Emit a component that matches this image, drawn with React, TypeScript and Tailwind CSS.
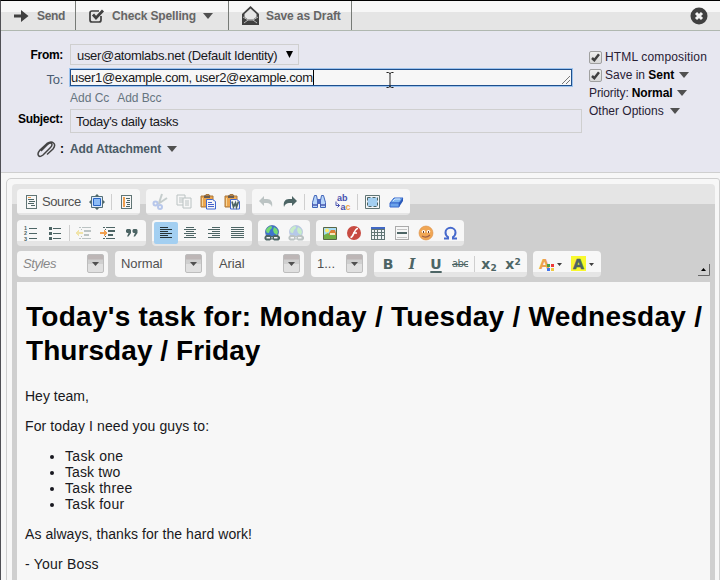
import React from "react";

type Kids = { children?: React.ReactNode };

/** 16x16 toolbar glyph in a fixed 24px cell. */
function Icon({ children, dim, active }: Kids & { dim?: boolean; active?: boolean }) {
  return (
    <span className={`flex h-[22px] w-6 shrink-0 items-center justify-center rounded-[2px] ${active ? "bg-[#a3cff1]" : ""} ${dim ? "opacity-35" : ""}`}>
      <svg width="16" height="16" viewBox="0 0 16 16" fill="none" className="shrink-0 overflow-visible">{children}</svg>
    </span>
  );
}

function Sep() {
  return <i className="mx-[2px] h-4 w-px shrink-0 bg-[#cfcfcf]" />;
}

function Group({ w, children, low }: Kids & { w: string; low?: boolean }) {
  return (
    <div className={`${w} flex h-[26px] shrink-0 items-center rounded-[4px] px-[2px] ${low ? "bg-[linear-gradient(#f7f7f7_24px,#e5e5e5_24px)]" : "bg-[linear-gradient(#f7f7f7_21px,#e5e5e5_21px)]"}`}>
      {children}
    </div>
  );
}

function Combo({ w, children, cls = "" }: Kids & { w: string; cls?: string }) {
  return (
    <div className={`${w} flex h-[26px] shrink-0 items-center justify-between rounded-[4px] bg-[#f7f7f7] pr-1 pl-[6px]`}>
      <span className={`text-[13px] leading-4 ${cls}`}>{children}</span>
      <span className="-mt-px flex h-[19px] w-[17px] items-center justify-center rounded-[2px] border border-[#bdbdbd] bg-[linear-gradient(#bdb6b6_4px,#cfcfcf_5px,#cfcfcf_9px,#e0e0e0_9px)]">
        <svg width="7" height="4" viewBox="0 0 7 4"><path d="M0 0h7L3.500 4z" fill="#505050" /></svg>
      </span>
    </div>
  );
}

function Caret({ cls = "" }: { cls?: string }) {
  return <svg className={`shrink-0 ${cls}`} width="10" height="6" viewBox="0 0 10 6"><path d="M0 0h10L5 6z" fill="#505050" /></svg>;
}

function Check() {
  return (
    <span className="flex h-[13px] w-[13px] shrink-0 items-center justify-center rounded-[2px] border border-[#a0a0a0] bg-gradient-to-b from-[#efefef] to-[#d8d8d8]">
      <svg width="9" height="9" viewBox="0 0 9 9"><path d="M1 5l2.3 2.2L8 1.200" stroke="#404040" strokeWidth="2.500" fill="none" /></svg>
    </span>
  );
}

function Lines({ rows }: { rows: [number, number][] }) {
  return (
    <g shapeRendering="crispEdges" fill="currentColor">
      {rows.map(([x, w], i) => <rect key={i} x={x} y={2 + i * 2} width={w} height="1" />)}
    </g>
  );
}

const INK = "#4d6565";

function IndentArt({ right }: { right?: boolean }) {
  return (
    <g shapeRendering="crispEdges">
      <path d="M3 2h2v1H3zM6 2h9v1H6zM8 5h7v2H8zM8 9h5v2H8zM3 13h2v1H3zM6 13h9v1H6zM5 4h1v1H5zM5 11h1v1H5z" fill={INK} />
      <path d={right ? "M0 7h4V5h1v1h1v1h1v2H6v1H5v1H4V9H0z" : "M7 7H3V5H2v1H1v1H0v2h1v1h1v1h1V9h4z"} fill={right ? "#f0a050" : "#e5c21c"} />
    </g>
  );
}

function Globe() {
  return (
    <>
      <circle cx="8" cy="7" r="6.500" fill="#3f75cd" stroke="#294da0" strokeWidth=".6" />
      <path d="M3 3.500Q5 .8 7.500 1L8 3 6 5 5 8 2.500 7.500 2 5zM10 2l3 2 1 3-1 3-3-2-1-3z" fill="#74db72" />
      <path d="M2 10h4l1 1h2l1-1h4l2 2v2l-1.500 1.500H10L9 14.500H7l-1 1H2L.5 14v-2z" fill={INK} />
      <path d="M2.500 12H6v1.500H2.500zM7 12.500h2v.8H7zM10 12h3.500v1.500H10z" fill="#f7f7f7" />
    </>
  );
}

function Clipboard({ word }: { word?: boolean }) {
  return (
    <>
      <path d="M1 2h4l1-1.500h3L10 2h3v11H1z" fill="#eba54d" stroke="#a8763d" />
      <path d="M4 1.500h6V4H4z" fill="#685b50" />
      <path d="M2.500 4v8" stroke="#f7d79b" />
      <path d="M6.500 5.500h6l3 2v7.500h-9z" fill="#f7f7f7" stroke="#4168d0" />
      {word ? <path d="M8 7.500l1.500 5.500 2-4 1 4 2-5.500" stroke={INK} strokeWidth="1.700" /> : <path d="M8 8.500h4M8 10.500h6M8 12.500h6" stroke="#4662cc" />}
    </>
  );
}

function Doc({ color, wide }: { color: string; wide?: boolean }) {
  return (
    <g shapeRendering="crispEdges">
      <path d="M3.500 1.500h10v13h-10z" stroke="#607575" />
      {wide ? (
        <><path d="M6 3v10" stroke={color} strokeWidth="2" /><path d="M8 4.500h4M9 6.500h3M8 8.500h4M9 10.500h3M8 12.500h4" stroke={INK} /></>
      ) : (
        <><path d="M5 3.500h3" stroke={color} /><path d="M5 5.500h6M6 7.500h6M5 9.500h6M8 11.500h4" stroke={INK} /></>
      )}
    </g>
  );
}

function RowOne() {
  return (
    <div className="flex gap-[6px]">
      <Group w="w-[123px]" low>
        <Icon><Doc color="#f0a050" /></Icon>
        <span className="-ml-[1px] w-[43px] text-[13px] leading-4 tracking-[-0.4px] text-[#505050]">Source</span>
        <Icon>
          <path d="M8 0l3 3H5zM8 16l3-3H5zM0 8l3-3v6zM16 8l-3-3v6z" fill={INK} />
          <path d="M2.500 2.500h11v11h-11z" fill="#dceafb" stroke="#546f76" />
          <path d="M4.500 4.500h7v7h-7z" fill="#8cbcf5" stroke="#2865c4" />
        </Icon>
        <Sep />
        <Icon><Doc color="#f0a050" wide /></Icon>
      </Group>
      <Group w="w-[100px]" low>
        <Icon dim>
          <path d="M10 0L7 9M15 4L6 10" stroke="#6b8280" strokeWidth="2" />
          <circle cx="3.500" cy="9.500" r="2" stroke="#426fd5" strokeWidth="2" />
          <circle cx="8" cy="13" r="2" stroke="#426fd5" strokeWidth="2" />
        </Icon>
        <Icon dim>
          <path d="M1 1h8v10H1z" fill="#f7f7f7" stroke={INK} /><path d="M3 4h4M3 6h4M3 8h4" stroke={INK} />
          <path d="M7 4h8v10H7z" fill="#f7f7f7" stroke={INK} /><path d="M9 7h4M9 9h4M9 11h4" stroke={INK} />
        </Icon>
        <Icon><Clipboard /></Icon>
        <Icon><Clipboard word /></Icon>
      </Group>
      <Group w="w-[158px]" low>
        <Icon dim><path d="M1 7l5-5v3h3c4 0 6 3 5 8-1-3-3-4-5-4H6v3z" fill={INK} /></Icon>
        <Icon><path d="M15 7l-5-5v3H7C3 5 1 8 2 13c1-3 3-4 5-4h3v3z" fill={INK} /></Icon>
        <Sep />
        <Icon>
          <path d="M3.500 1.500h2l1 5v7h-5v-5zM10.500 1.500h2l2 7v5h-5v-7z" fill="#b8d6fa" stroke="#4164b8" />
          <path d="M6 5h4v5H6z" fill="#4e6ac0" /><path d="M1 11h6M9 11h6" stroke="#4a59b0" strokeWidth="1.500" />
        </Icon>
        <Icon>
          <g fontFamily="Liberation Sans" fontSize="9" fontWeight="bold">
            <text x="2" y="6.500" fill="#4650ae">ab</text>
            <text x="5.500" y="15.500" fill="#4650ae">a<tspan fill="#eda34e">c</tspan></text>
          </g>
          <path d="M1 7.500v4h3.500M2.500 9.500l2 2-2 2" stroke="#4650ae" />
        </Icon>
        <Sep />
        <Icon>
          <path d="M1.500 1.500h14v13h-14z" stroke="#607575" />
          <path d="M3.500 3.500h10v9h-10z" fill="#a3cff1" stroke={INK} strokeDasharray="3 2" />
        </Icon>
        <Icon>
          <path d="M2 9l4-5h9l-4 5z" fill="#81b6ef" stroke="#3869cd" />
          <path d="M2 9h9v4H2z" fill="#6ba3ea" stroke="#3869cd" />
          <path d="M11 9l4-5v3l-4 6z" fill="#2858b9" /><path d="M5 7l2-2h5" stroke="#d7e9fd" />
        </Icon>
      </Group>
    </div>
  );
}

function RowTwo() {
  return (
    <div className="flex gap-[6px]">
      <Group w="w-[129px]">
        <Icon>
          <g fill={INK} fontSize="5.500" fontWeight="bold" fontFamily="Liberation Sans"><text x="1" y="4.500">1</text><text x="1" y="10">2</text><text x="1" y="15.500">3</text></g>
          <path d="M6 3.500h8M6 8.500h8M6 13.500h8" stroke={INK} />
        </Icon>
        <Icon><g shapeRendering="crispEdges"><path d="M2 2h3v3H2zM2 7h3v3H2zM2 12h3v3H2z" fill={INK} /><path d="M6 3.500h8M6 8.500h8M6 13.500h8" stroke={INK} /></g></Icon>
        <Sep />
        <Icon dim><IndentArt /></Icon>
        <Icon><IndentArt right /></Icon>
        <Icon>
          <path d="M2 5l1-1h3l1 1v3l-2.500 3.500H3L4.500 8H3L2 7z" fill={INK} />
          <path d="M8.500 5l1-1h3l1 1v3L11 11.500H9.500L11 8H9.500l-1-1z" fill={INK} />
        </Icon>
      </Group>
      <Group w="w-[100px]">
        <span className="flex text-[#253338]"><Icon active><Lines rows={[[2, 8], [2, 12], [2, 8], [2, 12], [2, 8], [2, 12]]} /></Icon></span>
        <span className="flex text-[#4d6565]">
          <Icon><Lines rows={[[4, 8], [2, 12], [4, 8], [2, 12], [4, 8], [2, 12]]} /></Icon>
          <Icon><Lines rows={[[6, 8], [2, 12], [6, 8], [2, 12], [6, 8], [2, 12]]} /></Icon>
          <Icon><Lines rows={[[1, 13], [1, 13], [1, 13], [1, 13], [1, 13], [1, 13]]} /></Icon>
        </span>
      </Group>
      <Group w="w-[52px]">
        <Icon><Globe /></Icon>
        <Icon dim><Globe /></Icon>
      </Group>
      <Group w="w-[148px]">
        <Icon>
          <path d="M1.500 2.500h13v12h-13z" fill="#a7dcf5" stroke="#596645" />
          <circle cx="5" cy="5.500" r="2" fill="#ffec6b" /><path d="M2 10l4-2 3 2h5v4H2z" fill="#74ae46" /><path d="M7 8l2-3h4l1 3v2H7z" fill="#dd7f35" /><path d="M8 8h5v2H8z" fill="#f6e4b8" />
        </Icon>
        <Icon>
          <circle cx="8" cy="8" r="7" fill="#c84b42" />
          <path d="M12 3.500C8 3.500 8 12 4.500 12.500M7 8h4" stroke="#fff" strokeWidth="1.700" />
        </Icon>
        <Icon>
          <g shapeRendering="crispEdges"><path d="M1 2h14v13H1z" fill="#607575" /><path d="M1 2h14v2H1z" fill="#4168c4" />
          {[5, 8, 11].map(y => [2, 5, 8, 12].map(x => <rect key={`${x}-${y}`} x={x} y={y} width={x === 8 ? 3 : 2} height={y === 11 ? 3 : 2} fill="#f0f3f7" />))}</g>
        </Icon>
        <Icon><g shapeRendering="crispEdges"><path d="M1.500 1.500h13v13h-13z" stroke="#aaa" /><path d="M3 4.500h10M3 12.500h10" stroke="#c4c4c4" /><path d="M3 8h10" stroke={INK} strokeWidth="2" /></g></Icon>
        <Icon>
          <circle cx="8" cy="8" r="7" fill="#f0a654" stroke="#dc8d43" strokeWidth=".6" />
          <ellipse cx="5.500" cy="6.500" rx="1.700" ry="1.500" fill="#fff" /><ellipse cx="10.500" cy="6.500" rx="1.700" ry="1.500" fill="#fff" />
          <path d="M5 6h1v2H5zM10 6h1v2h-1z" fill="#664033" /><path d="M4 11q4 2.500 8-1" stroke="#9f6047" strokeWidth="1.300" />
        </Icon>
        <Icon><path d="M2 13.500h4v-1.500Q3.500 10.500 3.500 7.500a5 4.700 0 0110 0q0 3-2.500 4.500v1.500h4" stroke="#4669cc" strokeWidth="2" /></Icon>
      </Group>
    </div>
  );
}

function RowThree() {
  return (
    <div className="flex">
      <div className="flex gap-[7px]">
        <Combo w="w-[91px]" cls="italic text-[#888] tracking-[-0.4px]">Styles</Combo>
        <Combo w="w-[91px]" cls="text-[#505050] tracking-[-0.1px]">Normal</Combo>
        <Combo w="w-[91px]" cls="text-[#505050] tracking-[-0.1px]">Arial</Combo>
        <Combo w="w-[56px]" cls="text-[#505050]">1...</Combo>
      </div>
      <div className="ml-[7px] flex gap-[6px]">
        <Group w="w-[153px]">
          <span className="flex items-center font-['DejaVu_Sans'] text-[14px] leading-[22px] font-bold text-[#4d6565]">
            <b className="w-6 text-center">B</b>
            <i className="w-6 text-center font-['DejaVu_Serif']">I</i>
            <u className="w-6 text-center decoration-2 underline-offset-2">U</u>
            <s className="w-6 text-center text-[10px] font-normal tracking-[-0.7px]">abc</s>
          </span>
          <Sep />
          <span className="flex font-['DejaVu_Sans'] text-[14px] leading-[18px] font-bold text-[#4d6565]">
            <span className="w-6 text-center">x<sub className="text-[9px]">2</sub></span>
            <span className="w-6 text-center">x<sup className="text-[9px]">2</sup></span>
          </span>
        </Group>
        <Group w="w-[68px]">
          <svg width="64" height="24" viewBox="0 0 64 24" fontFamily="DejaVu Sans" fontWeight="bold">
            <text x="4" y="17" fontSize="14" fill="#eda34e">A</text>
            <path d="M12 12h3v3h-3z" fill="#49a147" /><path d="M16 12h3v3h-3z" fill="#ed3838" /><path d="M12 16h3v3h-3z" fill="#4174ed" /><path d="M16 16h3v3h-3z" fill="#efc942" />
            <path d="M22 11h5l-2.500 3zM54 11h5l-2.500 3z" fill="#404040" />
            <path d="M36 4h15v15H36z" fill="#f8f82d" />
            <text x="38" y="17" fontSize="14" fill={INK} stroke={INK} strokeWidth=".5">A</text>
          </svg>
        </Group>
      </div>
      <svg className="mt-[13px] ml-auto" width="12" height="13" viewBox="0 0 12 13"><path d="M0 11.500h11.500V0" stroke="#666" fill="none" /><path d="M3 7l2.500-3L8 7z" fill="#000" /></svg>
    </div>
  );
}

function ActionBar() {
  const btn = "flex h-[29px] items-center border-r border-[#777b77]";
  return (
    <div className="flex h-[30px] items-center border-b border-[#b0b8b0] bg-[linear-gradient(#f7f7f7_11px,#e5e5e5_11px)] text-[12px] font-bold text-[#666]">
      <div className={`${btn} w-[75px] pl-[13px]`}>
        <svg width="15" height="12" viewBox="0 0 15 12"><path d="M0 4.500h7V0l7.500 6L7 12V7.500H0z" fill="#404040" /></svg>
        <span className="ml-[8px] tracking-[-0.3px]">Send</span>
      </div>
      <div className={`${btn} w-[153px] pl-[13px]`}>
        <svg width="17" height="14" viewBox="0 0 17 14" fill="none" stroke="#404040"><path d="M12 7v4q0 2-2 2H3q-2 0-2-2V4q0-2 2-2h7" strokeWidth="1.700" /><path d="M4 5.500l3 3.500 7-7.500" strokeWidth="2.800" /></svg>
        <span className="ml-[6px] w-[85px] whitespace-nowrap tracking-[-0.15px]">Check Spelling</span>
        <Caret cls="ml-[6px]" />
      </div>
      <div className={`${btn} w-[123px] pl-[13px]`}>
        <svg width="17" height="19" viewBox="0 0 17 19"><path d="M0 8l8.500-8L17 8v11H0z" fill="#404040" /><path d="M2.500 8l6-5.500 6 5.500v3l-3.500 2.500H6L2.500 11z" fill="#e5e5e5" /><path d="M2 17l4-3h5l4 3M1 11l5 3M16 11l-5 3" stroke="#bbb" fill="none" /></svg>
        <span className="ml-[7px] whitespace-nowrap tracking-[-0.1px]">Save as Draft</span>
      </div>
      <svg className="mr-[12px] ml-auto" width="18" height="18" viewBox="0 0 18 18"><circle cx="9" cy="9" r="8.500" fill="#404040" /><path d="M6 6l6 6M12 6l-6 6" stroke="#f3f3f3" strokeWidth="3" /></svg>
    </div>
  );
}

function Compose() {
  const label = "w-[62px] shrink-0 text-right text-[12px] font-bold tracking-[-0.3px] text-black";
  return (
    <div className="flex h-[142px] border-b border-[#cfcfcf] bg-[#e7e7f0] text-[13px] leading-[15px]">
      <div className="w-[588px] shrink-0 pt-[13px]">
        <div className="flex h-[21px]">
          <div className={`${label} pt-[4px]`}>From:</div>
          <div className="ml-[7px] flex h-[21px] w-[229px] items-center justify-between border border-[#cfcfcf] pr-[5px] pl-[6px] whitespace-nowrap text-[#181820]">
            <span className="pt-[2px] tracking-[-0.32px]">user@atomlabs.net (Default Identity)</span>
            <svg width="7" height="7" viewBox="0 0 7 7"><path d="M0 0h7L3.500 7z" fill="#000" /></svg>
          </div>
        </div>
        <div className="mt-[3px] flex h-[19px]">
          <div className="w-[62px] shrink-0 pt-[4px] text-right tracking-[-0.3px] text-[#495a70]">To:</div>
          <div className="relative mt-[1px] ml-[7px] h-[17px] w-[502px] border border-[#1f4f8c] bg-[#f7f7f7] outline outline-[#9cc3ee]">
            <span className="inline-block h-[15px] border-r border-black align-top leading-[15px] tracking-[-0.32px] text-[#181820]">user1@example.com, user2@example.com</span>
            <svg className="absolute right-[1px] bottom-[1px]" width="8" height="8" viewBox="0 0 8 8"><path d="M0 8l8-8M4 8l4-4" stroke="#777" /></svg>
            <svg className="absolute top-[2px] left-[315px]" width="8" height="16" viewBox="0 0 8 16" fill="none" stroke="#222"><path d="M.5.500h2l1.500 1 1.500-1h2M4 1v14M.5 15.500h2l1.500-1 1.500 1h2" /></svg>
          </div>
        </div>
        <div className="mt-[4px] flex gap-[8px] pl-[69px] text-[12px] text-[#667580]"><span>Add Cc</span><span className="tracking-[-0.1px]">Add Bcc</span></div>
        <div className="mt-[3px] flex h-[24px]">
          <div className={`${label} pt-[3px]`}>Subject:</div>
          <div className="ml-[7px] flex h-[24px] w-[512px] items-center border border-[#cfcfcf] pt-[1px] pl-[5px] tracking-[-0.3px] text-[#181820]">Today's daily tasks</div>
        </div>
        <div className="mt-[8px] flex h-[17px] items-center text-[12px] font-bold text-[#495a66]">
          <svg className="ml-[36px]" width="19" height="17" viewBox="0 0 19 17"><path d="M4 10l6-6q3-3 4.500-1.500T13 7l-7 7q-3 2.500-4.500.5T3 9l7-6.500Q14 0 16.500 2T16 8l-6 5.500" fill="none" stroke="#444" strokeWidth="1.500" /></svg>
          <span className="ml-[4px] w-[4px] text-black">:</span>
          <span className="ml-[6px] tracking-[-0.08px]">Add Attachment</span>
          <Caret cls="-mt-[2px] ml-[6px]" />
        </div>
      </div>
      <div className="pt-[17px] text-[12px] leading-[18px] whitespace-nowrap text-[#282034]">
        <div className="flex items-center"><Check /><span className="ml-[3px] tracking-[0.15px]">HTML composition</span></div>
        <div className="flex items-center"><Check /><span className="ml-[3px]">Save in <b className="text-black">Sent</b></span><Caret cls="ml-[5px]" /></div>
        <div className="flex items-center"><span className="tracking-[-0.12px]">Priority: <b className="text-black">Normal</b></span><Caret cls="ml-[5px]" /></div>
        <div className="flex items-center">Other Options<Caret cls="ml-[6px]" /></div>
      </div>
    </div>
  );
}

export default function App() {
  return (
    <div className="h-[580px] w-[720px] overflow-hidden border-t border-l border-t-black border-l-[#505055] bg-[#f7f7f7] font-['Liberation_Sans',Arial,sans-serif]">
      <ActionBar />
      <Compose />
      <div className="mt-[5px] ml-[5px] h-[420px] w-[714px] rounded-tl-[5px] rounded-tr-[3px] border border-[#cfcfcf] pt-[5px] pl-[5px]">
        <div className="h-[420px] w-[703px] rounded-t-[4px] bg-[linear-gradient(#e5e5e5_20px,#cfcfcf_20px)] px-[5px] pt-[5px]">
          <div className="flex flex-col gap-[5px]"><RowOne /><RowTwo /><RowThree /></div>
          <div className="mt-[5px] h-[310px] bg-[#f7f7f7] px-[8px] pt-[18px] text-[14px] leading-4 text-[#181820]">
            <h1 className="pl-[1px] text-[28px] leading-[34px] font-bold whitespace-nowrap text-black"><span className="tracking-[0.27px]">Today's task for: Monday / Tuesday / Wednesday /</span><br /><span className="tracking-[0.06px]">Thursday / Friday</span></h1>
            <p className="mt-[20px]">Hey team,</p>
            <p className="mt-[14px] tracking-[0.1px]">For today I need you guys to:</p>
            <ul className="mt-[14px] list-disc pl-10 tracking-[0.3px]"><li>Task one</li><li className="tracking-[0.1px]">Task two</li><li>Task three</li><li>Task four</li></ul>
            <p className="mt-[14px] tracking-[0.06px]">As always, thanks for the hard work!</p>
            <p className="mt-[14px] tracking-[0.2px]">- Your Boss</p>
          </div>
        </div>
      </div>
    </div>
  );
}
